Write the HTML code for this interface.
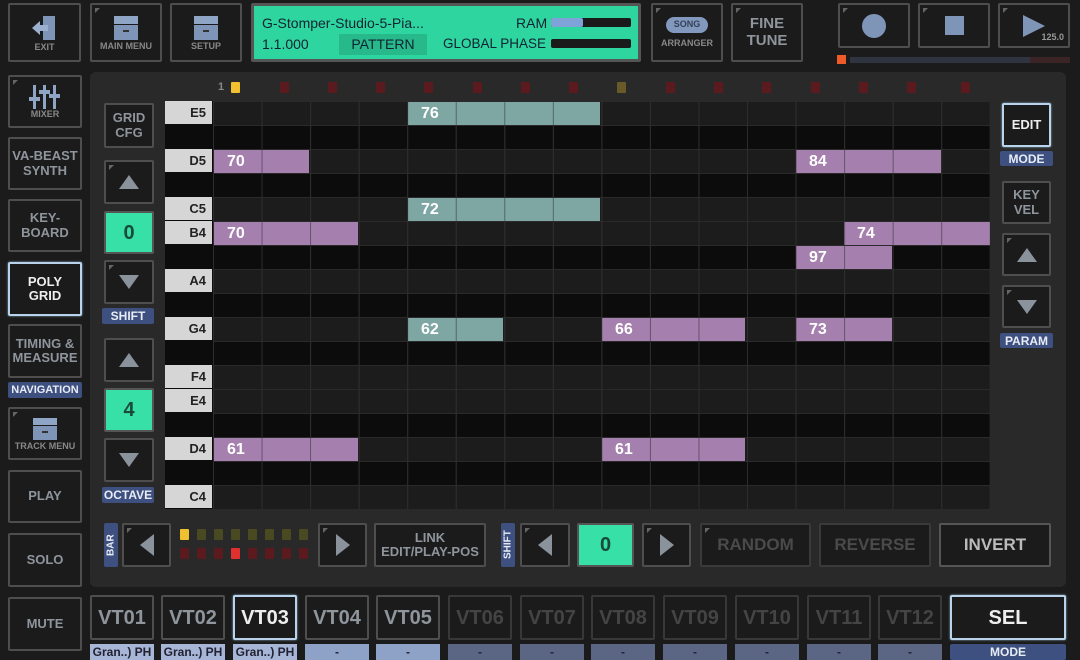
<!DOCTYPE html>
<html><head><meta charset="utf-8"><style>
*{box-sizing:border-box;margin:0;padding:0}
body{width:1080px;height:660px;background:#1b1b1b;font-family:"Liberation Sans",sans-serif;position:relative;overflow:hidden;font-weight:bold}
.a{position:absolute}
.b{position:absolute;background:#1b1b1b;border:2px solid #4e4e4e;border-radius:2px;color:#8f959c;display:flex;align-items:center;justify-content:center;text-align:center;line-height:1.1;white-space:nowrap}
.b.m::before{content:"";position:absolute;left:3px;top:3px;border-style:solid;border-width:5px 5px 0 0;border-color:#666 transparent transparent transparent}
.hl{border-color:#b9d3ec;color:#eee;box-shadow:0 0 2px #8ab}
.g{background:#36e0a6;border-color:#555;color:#1a4a3a;font-size:20px}
.lbl{position:absolute;background:#3e5080;color:#e8ecf4;font-size:12px;display:flex;align-items:center;justify-content:center;border-radius:2px}
.sm{font-size:9px;color:#888}
.t14{font-size:13px}
.tri-u{width:0;height:0;border-left:10px solid transparent;border-right:10px solid transparent;border-bottom:14px solid #8a929c}
.tri-d{width:0;height:0;border-left:10px solid transparent;border-right:10px solid transparent;border-top:14px solid #8a929c}
.tri-l{width:0;height:0;border-top:11px solid transparent;border-bottom:11px solid transparent;border-right:14px solid #8a929c}
.tri-r{width:0;height:0;border-top:11px solid transparent;border-bottom:11px solid transparent;border-left:14px solid #8a929c}
.row{position:absolute;left:0;width:777px;height:24px}
.key{position:absolute;left:165px;width:47px;height:23px;font-size:13px;color:#222;display:flex;align-items:center;justify-content:flex-end;padding-right:6px}
.n{position:absolute;height:23px;color:#fff;font-size:16px;display:flex;align-items:center;padding-left:13px}
.p{background:#a57fad}.tl{background:#7ea7a4}
.led{position:absolute;width:9px;height:11px;background:#5a1a1e;border-radius:1px}
.vt{position:absolute;top:595px;width:64px;height:45px;font-size:20px}
.vl{position:absolute;top:644px;width:64px;height:16px;font-size:12px;display:flex;align-items:center;justify-content:center;color:#223}
</style></head><body>
<!-- top bar -->
<div class="b" style="left:8px;top:3px;width:73px;height:59px;flex-direction:column"><svg width="30" height="30" viewBox="0 0 30 30"><path d="M13 3h12v24H13z" fill="#7f95b8"/><path d="M2 15l8-7v4h8v6h-8v4z" fill="#9bb0cf"/></svg><span class="sm">EXIT</span></div>
<div class="b m" style="left:90px;top:3px;width:72px;height:59px;flex-direction:column"><svg width="30" height="28"><rect x="3" y="2" width="24" height="8" fill="#8fa5c5"/><rect x="3" y="11" width="24" height="15" fill="#7f95b8"/><rect x="12" y="16" width="6" height="2" fill="#333"/></svg><span class="sm">MAIN MENU</span></div>
<div class="b" style="left:170px;top:3px;width:72px;height:59px;flex-direction:column"><svg width="30" height="28"><rect x="3" y="2" width="24" height="8" fill="#8fa5c5"/><rect x="3" y="11" width="24" height="15" fill="#7f95b8"/><rect x="12" y="16" width="6" height="2" fill="#333"/></svg><span class="sm">SETUP</span></div>
<div class="a" style="left:251px;top:3px;width:390px;height:59px;background:#2fd59f;border:3px solid #555;border-radius:2px;color:#123;font-weight:normal;font-size:14px">
 <div class="a" style="left:8px;top:9px">G-Stomper-Studio-5-Pia...</div>
 <div class="a" style="left:8px;top:30px">1.1.000</div>
 <div class="a" style="left:85px;top:28px;width:88px;height:21px;background:#27b98a;text-align:center;line-height:21px">PATTERN</div>
 <div class="a" style="left:262px;top:9px">RAM</div>
 <div class="a" style="left:189px;top:30px;font-size:13.5px">GLOBAL PHASE</div>
 <div class="a" style="left:297px;top:12px;width:80px;height:9px;background:#1a1a1a;border-radius:2px"><div style="width:32px;height:9px;background:#7fa2d8;border-radius:2px"></div></div>
 <div class="a" style="left:297px;top:33px;width:80px;height:9px;background:#1a1a1a;border-radius:2px"></div>
</div>
<div class="b m" style="left:651px;top:3px;width:72px;height:59px;flex-direction:column"><div style="background:#8299bd;color:#34405a;border-radius:8px;font-size:9px;padding:3px 8px;margin-bottom:6px">SONG</div><span class="sm">ARRANGER</span></div>
<div class="b m" style="left:731px;top:3px;width:72px;height:59px;font-size:15px">FINE<br>TUNE</div>
<div class="b m" style="left:838px;top:3px;width:72px;height:45px"><div style="width:24px;height:24px;border-radius:50%;background:#7f95b8"></div></div>
<div class="b m" style="left:918px;top:3px;width:72px;height:45px"><div style="width:19px;height:19px;background:#7f95b8"></div></div>
<div class="b m" style="left:998px;top:3px;width:72px;height:45px"><div style="width:0;height:0;border-top:11px solid transparent;border-bottom:11px solid transparent;border-left:22px solid #7f95b8"></div><span class="a" style="right:4px;bottom:3px;font-size:9px;color:#999">125.0</span></div>
<div class="a" style="left:837px;top:55px;width:9px;height:9px;background:#ef5a2a"></div>
<div class="a" style="left:850px;top:57px;width:180px;height:6px;background:#2f3440"></div>
<div class="a" style="left:1030px;top:57px;width:40px;height:6px;background:#3a2426"></div>

<!-- left column -->
<div class="b m" style="left:8px;top:75px;width:74px;height:53px;flex-direction:column"><svg width="34" height="26"><g fill="#8fa5c5"><rect x="5" y="1" width="3" height="24"/><rect x="15" y="1" width="3" height="24"/><rect x="25" y="1" width="3" height="24"/><rect x="1" y="13" width="11" height="4"/><rect x="11" y="6" width="11" height="4"/><rect x="21" y="10" width="11" height="4"/></g></svg><span class="sm">MIXER</span></div>
<div class="b t14" style="left:8px;top:137px;width:74px;height:53px">VA-BEAST<br>SYNTH</div>
<div class="b t14" style="left:8px;top:199px;width:74px;height:53px">KEY-<br>BOARD</div>
<div class="b t14 hl" style="left:8px;top:262px;width:74px;height:54px">POLY<br>GRID</div>
<div class="b t14" style="left:8px;top:324px;width:74px;height:54px">TIMING &amp;<br>MEASURE</div>
<div class="lbl" style="left:8px;top:382px;width:74px;height:16px;font-size:11px">NAVIGATION</div>
<div class="b m" style="left:8px;top:407px;width:74px;height:53px;flex-direction:column"><svg width="30" height="26"><rect x="3" y="2" width="24" height="7" fill="#8fa5c5"/><rect x="3" y="10" width="24" height="14" fill="#7f95b8"/><rect x="12" y="15" width="6" height="2" fill="#333"/></svg><span class="sm">TRACK MENU</span></div>
<div class="b t14" style="left:8px;top:470px;width:74px;height:53px">PLAY</div>
<div class="b t14" style="left:8px;top:533px;width:74px;height:54px">SOLO</div>
<div class="b t14" style="left:8px;top:597px;width:74px;height:54px">MUTE</div>

<!-- main panel -->
<div class="a" style="left:90px;top:72px;width:976px;height:515px;background:#292929;border-radius:6px"></div>
<div class="b t14" style="left:104px;top:103px;width:50px;height:45px;font-size:13px">GRID<br>CFG</div>
<div class="b m" style="left:104px;top:160px;width:50px;height:44px"><div class="tri-u"></div></div>
<div class="b g" style="left:104px;top:211px;width:50px;height:43px">0</div>
<div class="b m" style="left:104px;top:260px;width:50px;height:44px"><div class="tri-d"></div></div>
<div class="lbl" style="left:102px;top:308px;width:52px;height:16px">SHIFT</div>
<div class="b" style="left:104px;top:338px;width:50px;height:44px"><div class="tri-u"></div></div>
<div class="b g" style="left:104px;top:388px;width:50px;height:44px">4</div>
<div class="b" style="left:104px;top:438px;width:50px;height:44px"><div class="tri-d"></div></div>
<div class="lbl" style="left:102px;top:487px;width:52px;height:16px">OCTAVE</div>

<div class="b hl t14" style="left:1002px;top:103px;width:49px;height:44px">EDIT</div>
<div class="lbl" style="left:1000px;top:151px;width:53px;height:15px">MODE</div>
<div class="b t14" style="left:1002px;top:181px;width:49px;height:43px">KEY<br>VEL</div>
<div class="b m" style="left:1002px;top:233px;width:49px;height:43px"><div class="tri-u"></div></div>
<div class="b m" style="left:1002px;top:285px;width:49px;height:43px"><div class="tri-d"></div></div>
<div class="lbl" style="left:1000px;top:333px;width:53px;height:15px">PARAM</div>

<!-- header LEDs -->
<div class="a" style="left:218px;top:81px;font-size:11px;color:#888">1</div>
<div class="led" style="left:231px;top:82px;background:#f0c030"></div>
<div class="led" style="left:280px;top:82px"></div><div class="led" style="left:328px;top:82px"></div><div class="led" style="left:376px;top:82px"></div><div class="led" style="left:424px;top:82px"></div><div class="led" style="left:473px;top:82px"></div><div class="led" style="left:521px;top:82px"></div><div class="led" style="left:569px;top:82px"></div><div class="led" style="left:617px;top:82px;background:#6a5a2a"></div><div class="led" style="left:666px;top:82px"></div><div class="led" style="left:714px;top:82px"></div><div class="led" style="left:762px;top:82px"></div><div class="led" style="left:811px;top:82px"></div><div class="led" style="left:859px;top:82px"></div><div class="led" style="left:907px;top:82px"></div><div class="led" style="left:961px;top:82px"></div>

<!-- grid -->
<div class="a" style="left:165px;top:101px;width:825px;height:408px;background:#0c0c0c"></div>
<div class="a" style="left:213px;top:101px;width:777px;height:408px">
 <div class="row" style="top:0;background:#1c1c1c"></div>
 <div class="row" style="top:48px;background:#1c1c1c"></div>
 <div class="row" style="top:96px;background:#1c1c1c"></div>
 <div class="row" style="top:120px;background:#1c1c1c"></div>
 <div class="row" style="top:168px;background:#1c1c1c"></div>
 <div class="row" style="top:216px;background:#1c1c1c"></div>
 <div class="row" style="top:264px;background:#1c1c1c"></div>
 <div class="row" style="top:288px;background:#1c1c1c"></div>
 <div class="row" style="top:336px;background:#1c1c1c"></div>
 <div class="row" style="top:384px;background:#1c1c1c"></div>
 <div class="a" style="left:0;top:0;width:777px;height:408px;background-image:linear-gradient(to right,#333 1px,transparent 1px),linear-gradient(to bottom,#2a2a2a 1px,transparent 1px);background-size:48.56px 100%,100% 24px"></div>
</div>
<div class="key" style="top:101px;background:#d6d6d6">E5</div>
<div class="key" style="top:149px;background:#d6d6d6">D5</div>
<div class="key" style="top:197px;background:#d6d6d6">C5</div>
<div class="key" style="top:221px;background:#d6d6d6">B4</div>
<div class="key" style="top:269px;background:#d6d6d6">A4</div>
<div class="key" style="top:317px;background:#d6d6d6">G4</div>
<div class="key" style="top:365px;background:#d6d6d6">F4</div>
<div class="key" style="top:389px;background:#d6d6d6">E4</div>
<div class="key" style="top:437px;background:#d6d6d6">D4</div>
<div class="key" style="top:485px;background:#d6d6d6">C4</div>

<div class="n tl" style="left:408px;top:102px;width:192px">76</div>
<div class="n p" style="left:214px;top:150px;width:95px">70</div>
<div class="n p" style="left:796px;top:150px;width:145px">84</div>
<div class="n tl" style="left:408px;top:198px;width:192px">72</div>
<div class="n p" style="left:214px;top:222px;width:144px">70</div>
<div class="n p" style="left:844px;top:222px;width:146px">74</div>
<div class="n p" style="left:796px;top:246px;width:96px">97</div>
<div class="n tl" style="left:408px;top:318px;width:95px">62</div>
<div class="n p" style="left:602px;top:318px;width:143px">66</div>
<div class="n p" style="left:796px;top:318px;width:96px">73</div>
<div class="n p" style="left:214px;top:438px;width:144px">61</div>
<div class="n p" style="left:602px;top:438px;width:143px">61</div>
<div class="a" style="left:213px;top:101px;width:777px;height:408px;background-image:linear-gradient(to right,rgba(40,40,40,.5) 1px,transparent 1px);background-size:48.56px 100%"></div>

<!-- bottom controls -->
<div class="lbl" style="left:104px;top:523px;width:14px;height:44px;font-size:10px;writing-mode:vertical-rl;transform:rotate(180deg)">BAR</div>
<div class="b m" style="left:122px;top:523px;width:49px;height:44px"><div class="tri-l"></div></div>
<div class="a" style="left:180px;top:529px">
 <div class="led" style="left:0;top:0;background:#f0c030"></div><div class="led" style="left:17px;top:0;background:#4a4a22"></div><div class="led" style="left:34px;top:0;background:#4a4a22"></div><div class="led" style="left:51px;top:0;background:#4a4a22"></div><div class="led" style="left:68px;top:0;background:#4a4a22"></div><div class="led" style="left:85px;top:0;background:#4a4a22"></div><div class="led" style="left:102px;top:0;background:#4a4a22"></div><div class="led" style="left:119px;top:0;background:#4a4a22"></div>
 <div class="led" style="left:0;top:19px"></div><div class="led" style="left:17px;top:19px"></div><div class="led" style="left:34px;top:19px"></div><div class="led" style="left:51px;top:19px;background:#e03030"></div><div class="led" style="left:68px;top:19px"></div><div class="led" style="left:85px;top:19px"></div><div class="led" style="left:102px;top:19px"></div><div class="led" style="left:119px;top:19px"></div>
</div>
<div class="b m" style="left:318px;top:523px;width:49px;height:44px"><div class="tri-r"></div></div>
<div class="b" style="left:374px;top:523px;width:112px;height:44px;font-size:13px">LINK<br>EDIT/PLAY-POS</div>
<div class="lbl" style="left:501px;top:523px;width:14px;height:44px;font-size:10px;writing-mode:vertical-rl;transform:rotate(180deg)">SHIFT</div>
<div class="b m" style="left:520px;top:523px;width:50px;height:44px"><div class="tri-l"></div></div>
<div class="b g" style="left:577px;top:523px;width:57px;height:44px">0</div>
<div class="b m" style="left:642px;top:523px;width:49px;height:44px"><div class="tri-r"></div></div>
<div class="b m" style="left:700px;top:523px;width:111px;height:44px;font-size:17px;color:#4a4a4a;border-color:#3a3a3a">RANDOM</div>
<div class="b" style="left:819px;top:523px;width:112px;height:44px;font-size:17px;color:#4a4a4a;border-color:#3a3a3a">REVERSE</div>
<div class="b" style="left:939px;top:523px;width:112px;height:44px;font-size:17px;color:#bbb;border-color:#555">INVERT</div>

<!-- tracks -->
<div class="b vt" style="left:90px">VT01</div>
<div class="b vt" style="left:161px">VT02</div>
<div class="b vt hl" style="left:233px">VT03</div>
<div class="b vt" style="left:305px">VT04</div>
<div class="b vt" style="left:376px">VT05</div>
<div class="b vt" style="left:448px;color:#444;border-color:#383838">VT06</div>
<div class="b vt" style="left:520px;color:#444;border-color:#383838">VT07</div>
<div class="b vt" style="left:591px;color:#444;border-color:#383838">VT08</div>
<div class="b vt" style="left:663px;color:#444;border-color:#383838">VT09</div>
<div class="b vt" style="left:735px;color:#444;border-color:#383838">VT10</div>
<div class="b vt" style="left:807px;color:#444;border-color:#383838">VT11</div>
<div class="b vt" style="left:878px;color:#444;border-color:#383838">VT12</div>
<div class="b hl" style="left:950px;top:595px;width:116px;height:45px;font-size:20px">SEL</div>
<div class="vl" style="left:90px;background:#a7b6d6">Gran..) PH</div>
<div class="vl" style="left:161px;background:#a7b6d6">Gran..) PH</div>
<div class="vl" style="left:233px;background:#a7b6d6">Gran..) PH</div>
<div class="vl" style="left:305px;background:#8ea2c8">-</div>
<div class="vl" style="left:376px;background:#8ea2c8">-</div>
<div class="vl" style="left:448px;background:#5a6683">-</div>
<div class="vl" style="left:520px;background:#5a6683">-</div>
<div class="vl" style="left:591px;background:#5a6683">-</div>
<div class="vl" style="left:663px;background:#5a6683">-</div>
<div class="vl" style="left:735px;background:#5a6683">-</div>
<div class="vl" style="left:807px;background:#5a6683">-</div>
<div class="vl" style="left:878px;background:#5a6683">-</div>
<div class="lbl" style="left:950px;top:644px;width:116px;height:16px">MODE</div>
</body></html>
